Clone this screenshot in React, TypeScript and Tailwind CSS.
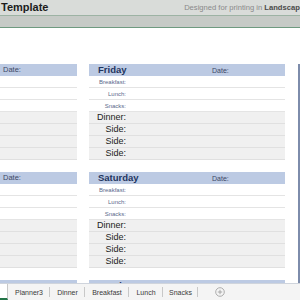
import React from 'react';

const font = { fontFamily: '"Liberation Sans", Arial, sans-serif' };

function DayBlock({ day, labels }: { day?: string; labels: boolean }) {
  const small = ['Breakfast:', 'Lunch:', 'Snacks:'];
  const big = ['Dinner:', 'Side:', 'Side:', 'Side:'];
  return (
    <div className="flex flex-col mb-[12px]">
      <div className="h-[12px] bg-[#bccae3] flex items-center">
        {labels ? (
          <>
            <span className="w-[123px] pl-[9px] text-[9.5px] font-bold text-[#1f3560] leading-none">{day}</span>
            <span className="text-[7px] text-[#3d4866] leading-none">Date:</span>
          </>
        ) : (
          <span className="pl-[3px] text-[7.5px] text-[#3d4866] leading-none">Date:</span>
        )}
      </div>
      {small.map((l, i) => (
        <div key={i} className="h-[12px] border-b border-[#e4e4e4] flex items-center">
          {labels && <span className="w-[37px] text-right text-[6px] text-[#5a6a8c] leading-none">{l}</span>}
        </div>
      ))}
      {big.map((l, i) => (
        <div key={i} className="h-[12px] bg-[#f0f0f0] border-b border-[#e0e0e0] flex items-center">
          {labels && <span className="w-[37px] text-right text-[9px] text-[#222222] leading-none">{l}</span>}
        </div>
      ))}
    </div>
  );
}

export default function App() {
  const tabs = [
    { name: 'Planner3', w: 'w-[42px]' },
    { name: 'Dinner', w: 'w-[35px]' },
    { name: 'Breakfast', w: 'w-[44px]' },
    { name: 'Lunch', w: 'w-[34px]' },
    { name: 'Snacks', w: 'w-[35px]' },
  ];
  return (
    <div className="w-[300px] h-[300px] overflow-hidden flex flex-col bg-white" style={font}>
      <div className="h-[16px] bg-[#d9dcd9] flex items-center justify-between border-b border-[#9db3a4] shrink-0">
        <span className="text-[11px] font-bold text-[#1c1c1c] leading-none pl-[1px]">Template</span>
        <span className="text-[7.6px] text-[#8a8a8a] leading-none whitespace-nowrap -mr-[4px]">
          Designed for printing in <b className="text-[#4a4a4a]">Landscape</b>
        </span>
      </div>
      <div className="h-[12px] bg-[#c6cac6] border-b border-[#6f9a80] shrink-0" />
      <div className="flex-1 overflow-hidden flex pt-[36px]">
        <div className="w-[77px] shrink-0">
          <DayBlock labels={false} />
          <DayBlock labels={false} />
          <DayBlock labels={false} />
        </div>
        <div className="w-[196px] ml-[12px] shrink-0">
          <DayBlock day="Friday" labels />
          <DayBlock day="Saturday" labels />
          <DayBlock day="Sunday" labels />
        </div>
        <div className="ml-[13px] w-[2px] bg-[#7d8cab] shrink-0" />
      </div>
      <div className="h-[17px] shrink-0 bg-[#f4f4f4] border-t border-[#cfd4dc] flex items-center text-[7px] text-[#3a3a3a]">
        <div className="w-[8px] h-full bg-white border-r border-[#c8c8c8] border-b-2 border-b-[#217346]" />
        {tabs.map((t) => (
          <div key={t.name} className={`${t.w} h-full flex items-center justify-center relative whitespace-nowrap`}>
            <span className="leading-none">{t.name}</span>
            <span className="absolute right-0 top-[3px] bottom-[3px] w-px bg-[#c8c8c8]" />
          </div>
        ))}
        <svg className="ml-[17px]" width="10" height="10" viewBox="0 0 10 10">
          <circle cx="5" cy="5" r="4.3" fill="none" stroke="#9a9a9a" strokeWidth="0.8" />
          <path d="M5 2.8v4.4M2.8 5h4.4" stroke="#9a9a9a" strokeWidth="0.8" />
        </svg>
      </div>
    </div>
  );
}
